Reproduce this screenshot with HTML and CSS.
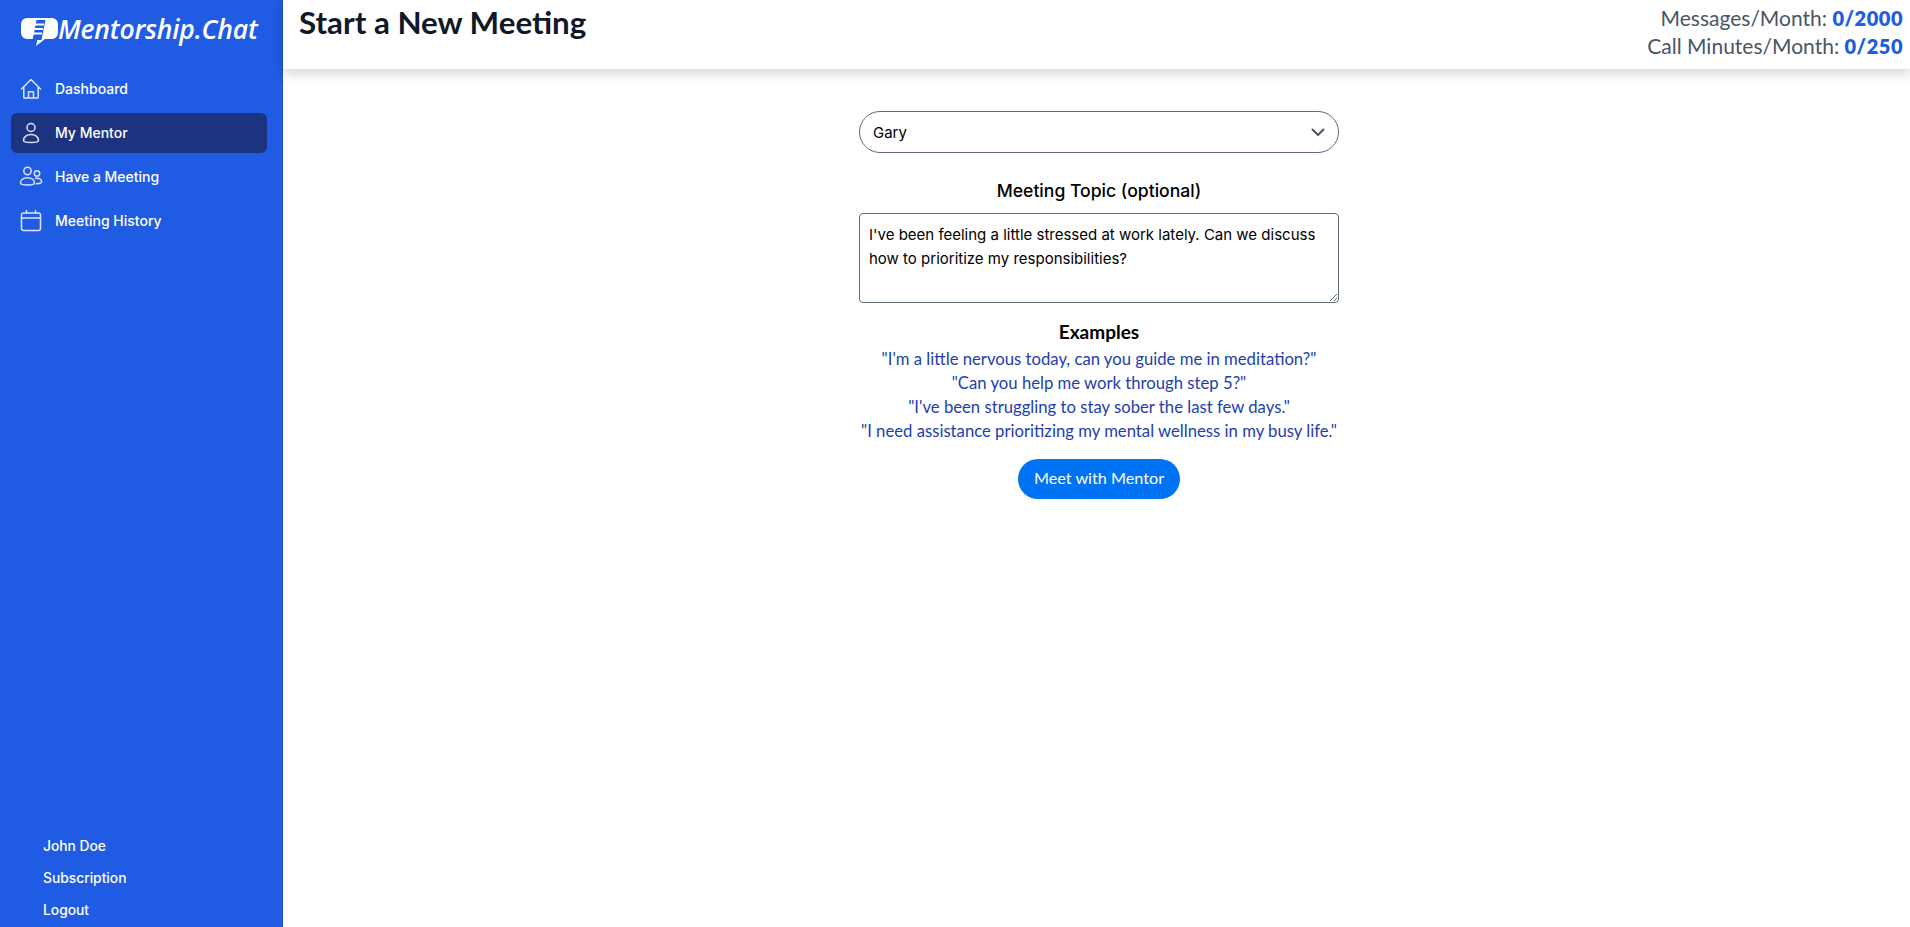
FILE: index.html
```html
<!DOCTYPE html>
<html lang="en">
<head>
    <meta charset="UTF-8">
    <meta name="viewport" content="width=device-width, initial-scale=1.0">
    <title>Start a New Meeting - Mentorship.Chat</title>
    <link rel="stylesheet" href="styles.css">
</head>
<body>
    <div class="app">
        <aside class="sidebar">
            <div class="logo">
                <svg class="logo-mark" width="37" height="29" viewBox="0 0 37 29">
                    <path fill="#fff" d="M6 0h25a6 6 0 0 1 6 6v9a6 6 0 0 1-6 6H24l-9 7 1.500-7H6a6 6 0 0 1-6-6V6a6 6 0 0 1 6-6z"/>
                    <path fill="#1f5ce3" d="M15.500 2h9l-4 20h-9z"/>
                    <path fill="none" stroke="#fff" stroke-width="2" d="M14 6.500h9M13 11h9M12 15.500h9"/>
                </svg>
                <span class="logo-text">Mentorship.Chat</span>
            </div>
            <nav class="nav">
                <a class="nav-item">
                    <svg class="nav-icon" viewBox="0 0 24 24"><path d="M2.500 12 12 2.500l9.500 9.500M4.800 10v10.200c0 .5.400.8.800.8h12.800c.4 0 .8-.3.800-.8V10M9.500 21v-5.500c0-.4.300-.7.700-.7h3.600c.4 0 .7.300.7.700V21"/></svg>
                    Dashboard
                </a>
                <a class="nav-item active">
                    <svg class="nav-icon" viewBox="0 0 24 24"><circle cx="12" cy="6.500" r="4"/><path d="M4.500 19.500c0-3.600 3.400-6 7.500-6s7.500 2.400 7.500 6c0 1.200-3.400 2-7.500 2s-7.500-.8-7.500-2z"/></svg>
                    My Mentor
                </a>
                <a class="nav-item">
                    <svg class="nav-icon" viewBox="0 0 24 24"><circle cx="8.500" cy="6" r="3.700"/><circle cx="18" cy="8.500" r="2.700"/><path d="M1.500 18c0-3.300 3.100-5.300 7-5.300s7 2 7 5.300c0 1.200-3.100 2-7 2s-7-.8-7-2zM16.500 13.300c3.500-.5 6.200 1 6.200 3.500 0 1-1.800 1.800-5.200 1.900"/></svg>
                    Have a Meeting
                </a>
                <a class="nav-item">
                    <svg class="nav-icon" viewBox="0 0 24 24"><rect x="2.500" y="4" width="19" height="17.500" rx="2"/><path d="M2.500 9h19M7.500 1.500V4M16.500 1.500V4"/></svg>
                    Meeting History
                </a>
            </nav>
            <div class="account">
                <a class="account-link">John Doe</a>
                <a class="account-link">Subscription</a>
                <a class="account-link">Logout</a>
            </div>
        </aside>
        <div class="main">
            <header class="topbar">
                <h1 class="page-title">Start a New Meeting</h1>
                <div class="usage">
                    <div>Messages/Month: <b>0/2000</b></div>
                    <div>Call Minutes/Month: <b>0/250</b></div>
                </div>
            </header>
            <div class="content">
                <form class="meeting-form">
                    <div class="mentor-select">
                        <span>Gary</span>
                        <svg class="chevron" width="14" height="9" viewBox="0 0 14 9"><path d="M1.500 1.500 7 7l5.500-5.500"/></svg>
                    </div>
                    <label class="topic-label" for="topic">Meeting Topic (optional)</label>
                    <textarea class="topic" id="topic">I've been feeling a little stressed at work lately. Can we discuss how to prioritize my responsibilities?</textarea>
                    <h2 class="examples-title">Examples</h2>
                    <div class="examples">
                        <div>"I'm a little nervous today, can you guide me in meditation?"</div>
                        <div>"Can you help me work through step 5?"</div>
                        <div>"I've been struggling to stay sober the last few days."</div>
                        <div>"I need assistance prioritizing my mental wellness in my busy life."</div>
                    </div>
                    <button class="meet-btn" type="button">Meet with Mentor</button>
                </form>
            </div>
        </div>
    </div>
</body>
</html>
```

FILE: styles.css
```css
* { box-sizing: border-box; }
html, body { height: 100%; }
body { margin: 0; font-family: Lato, "Open Sans", sans-serif; color: #000; background: #fff; overflow: hidden; }

.app { display: flex; height: 927px; }

.sidebar { width: 283px; flex: none; display: flex; flex-direction: column; background: #1f5ce3; border-right: 1px solid #1d4ed8; color: #fff; }

.logo { display: flex; align-items: flex-start; height: 67px; padding: 18px 0 0 21px; }
.logo-mark { flex: none; }
.logo-text { font-family: "Open Sans", sans-serif; font-style: italic; font-weight: 600; font-size: 26.500px; line-height: 22px; letter-spacing: -0.2px; }

.nav { display: flex; flex-direction: column; gap: 4px; padding: 2px 15px 0 11px; flex: 1; }
.nav-item { display: flex; align-items: center; gap: 12px; height: 40px; padding: 0 8px 1px; border-radius: 6px; font-family: Inter, sans-serif; font-size: 14px; font-weight: 500; color: #fff; }
.nav-item.active { background: #1e3380; }
.nav-icon { width: 24px; height: 24px; flex: none; fill: none; stroke: #dbe6fe; stroke-width: 1.500; stroke-linecap: round; stroke-linejoin: round; }

.account { display: flex; flex-direction: column; padding: 0 0 1px 43px; }
.account-link { height: 32px; line-height: 32px; font-family: Inter, sans-serif; font-size: 13.800px; font-weight: 500; color: #fff; }

.main { flex: 1; min-width: 0; display: flex; flex-direction: column; }

.topbar { height: 69px; flex: none; display: flex; justify-content: space-between; align-items: flex-start; padding: 0 7px 0 16px; background: #fff; box-shadow: 0 4px 12px rgba(0, 0, 0, 0.18); }
.page-title { margin: 0; font-size: 31.300px; line-height: 45px; font-weight: 700; color: #111827; }
.usage { text-align: right; font-size: 21px; line-height: 28px; padding-top: 4px; color: #4b5563; }
.usage b { color: #1f5ce3; font-size: 20px; font-weight: 800; letter-spacing: 0.5px; }

.content { padding: 42px 0 0 5px; }
.meeting-form { width: 480px; margin: 0 auto; display: flex; flex-direction: column; align-items: center; }
.mentor-select { width: 100%; height: 42px; display: flex; align-items: center; justify-content: space-between; padding: 0 13px; border: 1px solid #5f6b7f; border-radius: 21px; font-family: Inter, sans-serif; font-size: 15px; }
.chevron { fill: none; stroke: #4b5563; stroke-width: 2; stroke-linecap: round; stroke-linejoin: round; }

.topic-label { margin-top: 26px; font-family: Inter, sans-serif; font-size: 17.600px; font-weight: 500; line-height: 24px; }
.topic { width: 100%; height: 90px; margin-top: 10px; padding: 9px 9px 7px; border: 1px solid #5f6b7f; border-radius: 4px; font-family: Inter, sans-serif; font-size: 15px; line-height: 24px; color: #000; }

.examples-title { margin: 17px 0 0; font-size: 19px; font-weight: 700; line-height: 24px; }
.examples { margin-top: 3px; text-align: center; font-size: 16.700px; line-height: 24px; color: #1e40af; white-space: nowrap; }

.meet-btn { margin-top: 16px; height: 40px; padding: 0 16px 3px; border: none; border-radius: 20px; background: #0073f5; color: #fff; font-family: Lato, sans-serif; font-size: 16.200px; }
```
